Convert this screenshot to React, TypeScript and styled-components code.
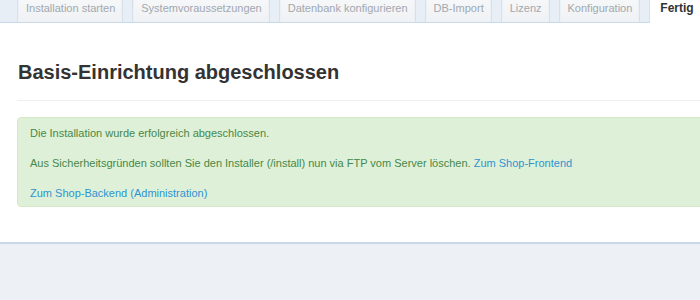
import React, { FC } from "react"
import styled, { createGlobalStyle } from "styled-components"

const steps = [
  "Installation starten",
  "Systemvoraussetzungen",
  "Datenbank konfigurieren",
  "DB-Import",
  "Lizenz",
  "Konfiguration",
  "Fertig",
]

const App: FC = () => {
  const current = "Fertig"

  return (
    <>
      <GlobalStyle />
      <Page>
        <TabBar>
          {steps.map(s => (
            <Tab key={s} active={s === current}>
              {s}
            </Tab>
          ))}
        </TabBar>
        <Panel>
          <Heading>Basis-Einrichtung abgeschlossen</Heading>
          <Rule />
          <Alert>
            <Para>Die Installation wurde erfolgreich abgeschlossen.</Para>
            <Para>
              Aus Sicherheitsgründen sollten Sie den Installer (/install) nun via FTP vom Server löschen.{" "}
              <Link href="#">Zum Shop-Frontend</Link>
            </Para>
            <Para>
              <Link href="#">Zum Shop-Backend (Administration)</Link>
            </Para>
          </Alert>
        </Panel>
      </Page>
    </>
  )
}

export default App

//---------------------------STYLES-------------------------------------------//

const GlobalStyle = createGlobalStyle`
  html, body {
    margin: 0;
    padding: 0;
    overflow: hidden;
  }
  body {
    background: #edf1f6;
    font-family: "Liberation Sans", Arial, sans-serif;
    font-size: 11px;
  }
`

const Page = styled.div`
  width: 760px;
`

const TabBar = styled.div`
  display: flex;
  gap: 9px;
  height: 22px;
  padding-left: 17px;
  background: #e7eef6;
  border-bottom: 1px solid #cbd9e8;
`

interface TProps {
  active: boolean
}

const Tab = styled.div<TProps>`
  height: ${props => (props.active ? "23px" : "22px")};
  padding: 0 ${props => (props.active ? "20px" : "7px")} 0 ${props => (props.active ? "10px" : "8px")};
  line-height: 16px;
  box-sizing: border-box;
  white-space: nowrap;
  border-left: 1px solid #d6e1ec;
  border-right: 1px solid #d6e1ec;
  background: ${props => (props.active ? "#ffffff" : "linear-gradient(#f6f7f8, #eff1f4)")};
  color: ${props => (props.active ? "#333333" : "#a1a8b0")};
  font-weight: ${props => (props.active ? "bold" : "normal")};
  font-size: ${props => (props.active ? "12px" : "11px")};
  box-shadow: ${props => (props.active ? "none" : "inset 1px 0 0 #eaf0f6, inset -1px 0 0 #eaf0f6")};
`

const Panel = styled.div`
  background: #ffffff;
  padding: 38px 0 35px 17px;
  border-bottom: 2px solid #c8d8e8;
  box-shadow: 0 3px 5px rgba(170, 195, 220, 0.35);
`

const Heading = styled.h1`
  margin: 0 0 17px 1px;
  font-size: 20px;
  line-height: 22px;
  font-weight: bold;
  color: #333333;
`

const Rule = styled.hr`
  margin: 0 0 16px;
  border: 0;
  border-top: 1px solid #eeeeee;
  height: 0;
`

const Alert = styled.div`
  padding: 6px 12px 4px;
  background: #dff0d8;
  border: 1px solid #d6e9c6;
  border-radius: 4px;
  color: #468847;
`

const Para = styled.p`
  margin: 0 0 12px;
  line-height: 18px;
  &:last-child {
    margin-bottom: 0;
  }
`

const Link = styled.a`
  color: #2d94d2;
  text-decoration: none;
`
